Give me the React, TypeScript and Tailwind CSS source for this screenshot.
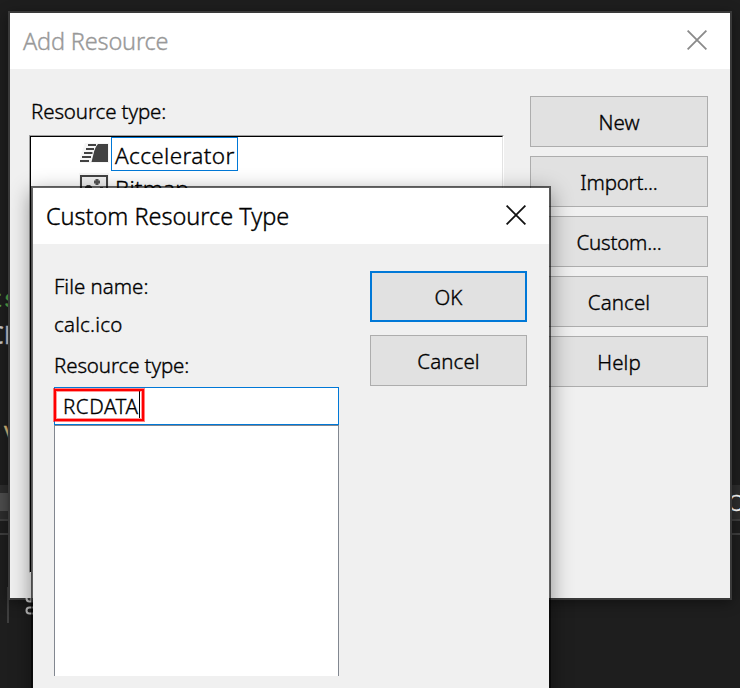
import type { ReactNode } from 'react';

function CloseIcon({ color }: { color: string }) {
  return (
    <svg width="20" height="20" viewBox="0 0 20 20" fill="none" stroke={color} strokeWidth="1.8">
      <path d="M0.6 0.6 19.4 19.4M19.4 0.6 0.6 19.4" />
    </svg>
  );
}

function AcceleratorIcon() {
  return (
    <svg width="30" height="20" viewBox="0 0 30 20" className="block">
      <path d="M5 0H29V20H0V14Z" fill="#f6f6f6" />
      <path d="M18 1H28V19H11.500L13.500 11Q15 4 18 1Z" fill="#424242" />
      <path d="M8 2H16M6 6H14M4 10H12.500M2 14H11M0 18H9" stroke="#424242" strokeWidth="1.8" />
    </svg>
  );
}

function BitmapIcon() {
  return (
    <svg width="30" height="20" viewBox="0 0 30 20" className="block overflow-visible">
      <path d="M-1 -1H29V20H-1Z" fill="#f6f6f6" />
      <path d="M1 20V2H27V20" fill="#efefef" stroke="#424242" strokeWidth="2" />
      <path d="M15.500 5H18.500V6.500H20V9.500H18.500V11H15.500V9.500H14V6.500H15.500Z" fill="#555" />
      <path d="M5 20V13L7 11H10L12 13V20Z" fill="#424242" />
      <path d="M20 13H23V20H20Z" fill="#555" />
    </svg>
  );
}

function DialogButton({ children, primary = false, tight = false }: { children: ReactNode; primary?: boolean; tight?: boolean }) {
  return (
    <button
      className={`flex h-[51px] w-full shrink-0 items-center justify-center bg-[#e1e1e1] pt-[2px] text-[20.5px] leading-none ${
        primary ? 'border-2 border-[#0078d7]' : 'border border-[#adadad]'
      } ${tight ? 'tracking-[-0.2px]' : 'tracking-[0.1px]'}`}
    >
      {children}
    </button>
  );
}

function Backdrop() {
  return (
    <>
      <div className="absolute left-0 top-[485px] h-[36px] w-full border-b-2 border-[#3e3e3e] bg-[#2d2d2d]" />
      <div className="absolute left-0 top-[493px] h-[18px] w-[10px] bg-[#4d4d4d]" />
      <div className="absolute left-0 top-[533px] h-[2px] w-full bg-[#3e3e3e]" />
      <div className="absolute left-[7px] top-[587px] h-[36px] w-[2px] bg-[#3f3f3f]" />
      <div className="absolute left-[-11px] top-[289px] font-['Liberation_Mono',monospace] text-[24px] font-normal leading-none text-[#57a64a]">ts</div>
      <div className="absolute left-[-12px] top-[322px] font-['Noto_Sans',sans-serif] text-[25px] font-normal leading-none text-[#c8c8c8]">CE</div>
      <div className="absolute left-[4px] top-[418px] font-['Noto_Sans',sans-serif] text-[24px] font-normal leading-none text-[#d7ba7d]">v</div>
      <div className="absolute left-[728px] top-[491px] font-['Noto_Sans',sans-serif] text-[22px] leading-none text-white">O</div>
    </>
  );
}

function BackdropGlyphs() {
  return (
    <svg className="absolute left-[24px] top-[598px]" width="12" height="20" viewBox="0 0 12 20" fill="none" stroke="#c0c0c0" strokeWidth="2">
      <path d="M2.500 0Q2.500 3.500 5.500 3.500H7.500V0M9 9.500H5.500Q2.500 9.500 2.500 12.500T5.500 15.500H9" />
    </svg>
  );
}

function AddResourceDialog() {
  return (
    <section className="absolute left-[8px] top-[11px] flex h-[589px] w-[724px] flex-col border-2 border-[#3a3a3a] bg-[#f0f0f0] shadow-[0_3px_12px_rgba(0,0,0,0.4)]">
      <header className="flex h-[56px] shrink-0 items-center justify-between bg-white pl-[13px] pr-[23px] text-[#999]">
        <h1 className="pt-px text-[23.5px] leading-none tracking-[-0.18px]">Add Resource</h1>
        <div className="mb-[2px]"><CloseIcon color="#8a8a8a" /></div>
      </header>
      <div className="flex min-h-0 flex-1 justify-between pl-[19px] pr-[22px] pt-[27px]">
        <div className="w-[475px]">
          <div className="h-[39px] pl-[2px] pt-[4px] text-[20.5px] leading-[22px] tracking-[-0.12px]">Resource type:</div>
          <div className="h-[438px] border-b border-l border-r border-t border-b-white border-l-[#a0a0a0] border-r-white border-t-[#a0a0a0]">
            <div className="h-full border-l border-r border-t border-l-black border-r-[#e3e3e3] border-t-black bg-white">
              <div className="flex h-[35px] items-start pl-[49px]">
                <div className="mt-[6px] h-[20px] w-[30px]"><AcceleratorIcon /></div>
                <div className="ml-px flex h-[34px] w-[127px] items-center border border-[#0078d7] pl-[3px] pt-[5px] text-[22.5px] leading-none tracking-[0.38px]">Accelerator</div>
              </div>
              <div className="flex h-[34px] items-start pl-[49px]">
                <div className="mt-[2px] h-[20px] w-[30px]"><BitmapIcon /></div>
                <div className="ml-px flex h-[34px] items-center pl-[4px] pt-px text-[22.5px] leading-none tracking-[0.2px]">Bitmap</div>
              </div>
            </div>
          </div>
        </div>
        <div className="flex w-[178px] flex-col gap-[9px]">
          <DialogButton>New</DialogButton>
          <DialogButton tight>Import...</DialogButton>
          <DialogButton tight>Custom...</DialogButton>
          <DialogButton>Cancel</DialogButton>
          <DialogButton>Help</DialogButton>
        </div>
      </div>
    </section>
  );
}

function CustomTypeDialog() {
  return (
    <section className="absolute left-[31px] top-[186px] flex h-[560px] w-[520px] flex-col border-2 border-black/60 bg-[#f0f0f0] bg-clip-padding shadow-[0_6px_20px_rgba(0,0,0,0.42)]">
      <header className="flex h-[56px] shrink-0 items-center justify-between bg-white pl-[13px] pr-[23px]">
        <h2 className="pt-px text-[23.5px] leading-none tracking-[-0.03px]">Custom Resource Type</h2>
        <div className="mb-[2px]"><CloseIcon color="#111" /></div>
      </header>
      <div className="flex justify-between pl-[21px] pr-[22px] pt-[27px]">
        <div className="w-[285px] text-[20.5px] leading-[22px]">
          <div className="h-[38px] pt-[4px]">File name:</div>
          <div className="h-[41px] pt-[4px] tracking-[0.2px]">calc.ico</div>
          <div className="h-[37px] pt-[4px] tracking-[-0.12px]">Resource type:</div>
          <div className="relative flex h-[38px] items-center border border-[#0078d7] bg-white pl-[8px] text-[20.5px] tracking-[0.55px]">
            RCDATA
            <span className="absolute left-[84px] top-[3px] h-[27px] w-px bg-black" />
            <span className="absolute left-[-1px] top-px h-[32px] w-[90px] border-[2px] border-[#f00] shadow-[0_0_0_1px_rgba(255,0,0,0.5),inset_0_0_0_1px_rgba(255,0,0,0.4)]" />
          </div>
          <div className="h-[251px] border-l border-r border-t border-[#828790] bg-white" />
        </div>
        <div className="flex w-[157px] flex-col gap-[13px]">
          <DialogButton primary>OK</DialogButton>
          <DialogButton>Cancel</DialogButton>
        </div>
      </div>
    </section>
  );
}

export default function App() {
  return (
    <main className="relative h-[688px] w-[740px] overflow-hidden bg-[#1e1e1e] font-['Noto_Sans','Open_Sans',sans-serif] font-light text-black [-webkit-text-stroke-width:0.35px]">
      <Backdrop />
      <AddResourceDialog />
      <BackdropGlyphs />
      <CustomTypeDialog />
    </main>
  );
}
